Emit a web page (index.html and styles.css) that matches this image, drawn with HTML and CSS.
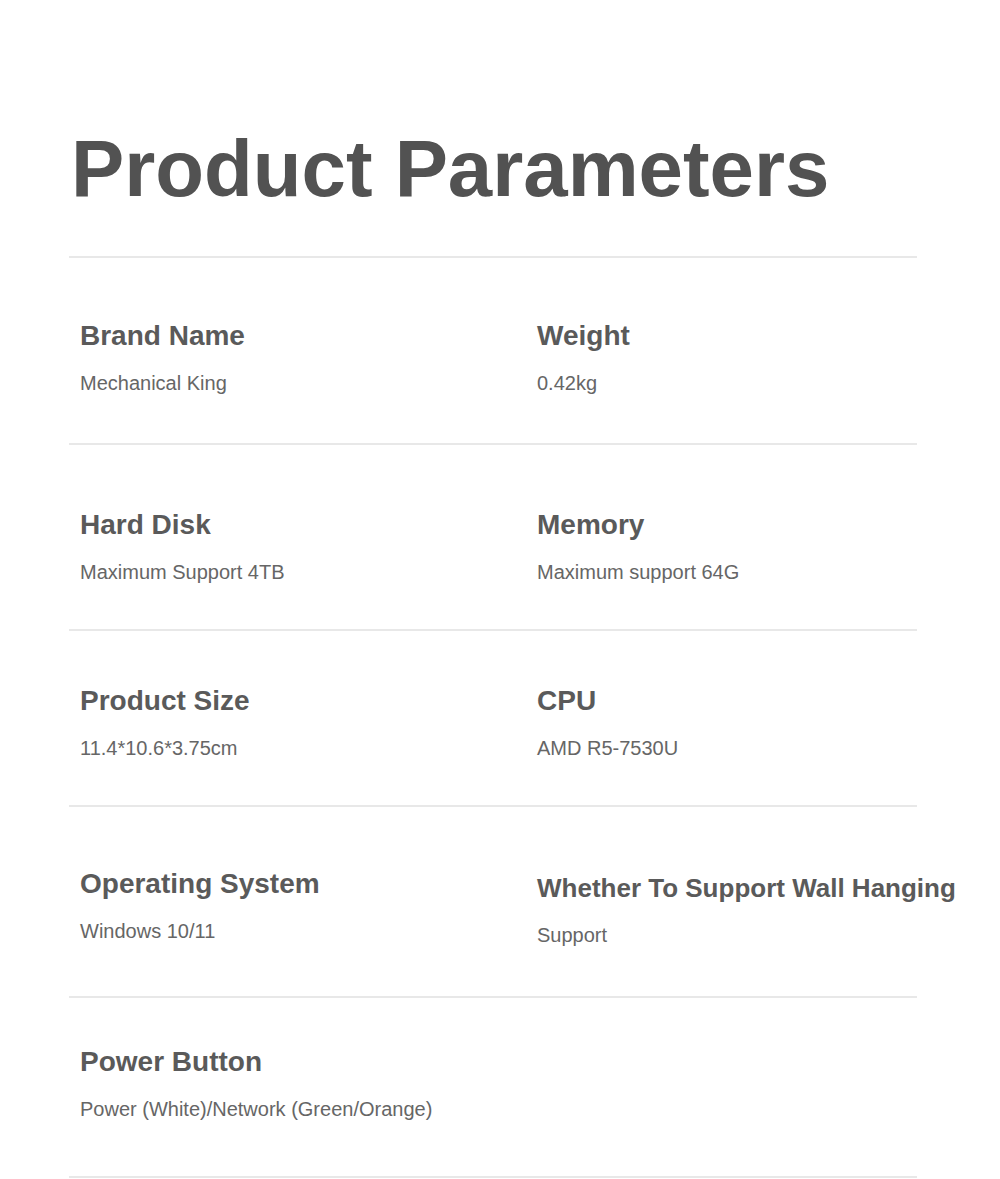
FILE: index.html
```html
<!DOCTYPE html>
<html lang="en">
<head>
<meta charset="utf-8">
<title>Product Parameters</title>
<link rel="stylesheet" href="styles.css">
</head>
<body>
<main class="page">
  <header class="header">
    <h1 class="title">Product Parameters</h1>
  </header>
  <section class="row row-1">
    <div class="cell">
      <div class="label">Brand Name</div>
      <div class="value">Mechanical King</div>
    </div>
    <div class="cell">
      <div class="label">Weight</div>
      <div class="value">0.42kg</div>
    </div>
  </section>
  <section class="row row-2">
    <div class="cell">
      <div class="label">Hard Disk</div>
      <div class="value">Maximum Support 4TB</div>
    </div>
    <div class="cell">
      <div class="label">Memory</div>
      <div class="value">Maximum support 64G</div>
    </div>
  </section>
  <section class="row row-3">
    <div class="cell">
      <div class="label">Product Size</div>
      <div class="value">11.4*10.6*3.75cm</div>
    </div>
    <div class="cell">
      <div class="label">CPU</div>
      <div class="value">AMD R5-7530U</div>
    </div>
  </section>
  <section class="row row-4">
    <div class="cell">
      <div class="label">Operating System</div>
      <div class="value">Windows 10/11</div>
    </div>
    <div class="cell cell-shifted">
      <div class="label label-long">Whether To Support Wall Hanging</div>
      <div class="value">Support</div>
    </div>
  </section>
  <section class="row row-5">
    <div class="cell">
      <div class="label">Power Button</div>
      <div class="value">Power (White)/Network (Green/Orange)</div>
    </div>
    <div class="cell"></div>
  </section>
</main>
</body>
</html>
```

FILE: styles.css
```css
html, body {
  margin: 0;
  padding: 0;
  background: #ffffff;
}

body {
  font-family: "Liberation Sans", Arial, sans-serif;
  color: #555555;
}

.page {
  width: 848px;
  margin-left: 69px;
  padding-top: 123px;
}

.header {
  padding-bottom: 41px;
  border-bottom: 2px solid #e8e8e8;
}

.title {
  margin: 0;
  padding-left: 2px;
  font-size: 79.8px;
  line-height: 92px;
  font-weight: 700;
  color: #525252;
  white-space: nowrap;
}

.row {
  display: grid;
  grid-template-columns: 457px 1fr;
  padding-left: 11px;
  border-bottom: 2px solid #e8e8e8;
}

.row-1 { padding-top: 62px; padding-bottom: 48px; }
.row-2 { padding-top: 64px; padding-bottom: 45px; }
.row-3 { padding-top: 54px; padding-bottom: 45px; }
.row-4 { padding-top: 61px; padding-bottom: 53px; }
.row-5 { padding-top: 48px; padding-bottom: 55px; }

.cell {
  display: flex;
  flex-direction: column;
  gap: 19px;
  white-space: nowrap;
}

.cell-shifted {
  padding-top: 4px;
  margin-bottom: -4px;
}

.label {
  font-size: 28px;
  line-height: 32px;
  font-weight: 700;
  color: #5a5a5a;
}

.label-long {
  font-size: 26px;
}

.value {
  font-size: 20px;
  line-height: 24px;
  color: #666666;
}
```
